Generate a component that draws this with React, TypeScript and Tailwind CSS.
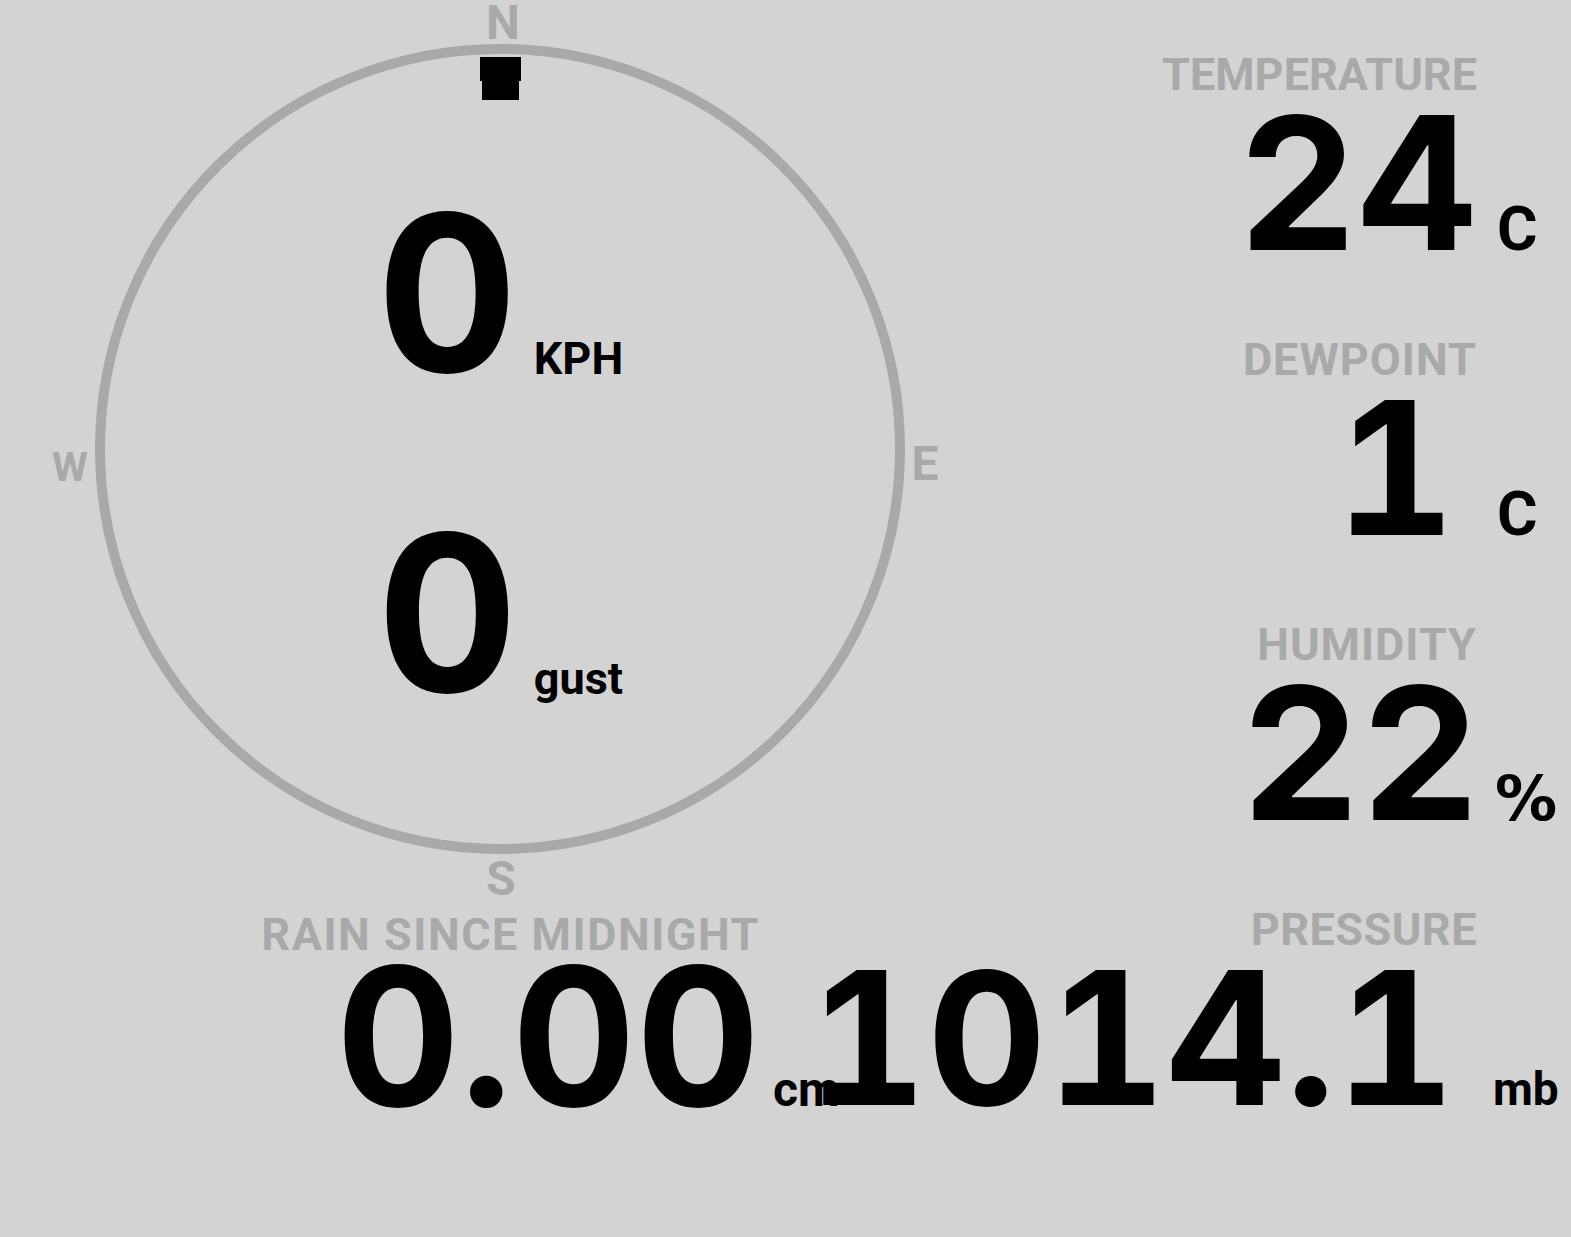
import React from "react";

type Stat = {
  label: string;
  value: string;
  unit: string;
  unitClass: string;
  numClass: string;
  labelClass: string;
};

const stats: Stat[] = [
  { label: "TEMPERATURE", value: "24", unit: "C", unitClass: "pl-[24px] text-[62px]", numClass: "mr-[-4px]", labelClass: "tracking-[0px]" },
  { label: "DEWPOINT", value: "1", unit: "C", unitClass: "pl-[24px] text-[62px]", numClass: "mr-[18px]", labelClass: "tracking-[1px]" },
  { label: "HUMIDITY", value: "22", unit: "%", unitClass: "pl-[22px] text-[62px] font-['DejaVu_Sans',sans-serif]", numClass: "mr-[-7px]", labelClass: "tracking-[1px]" },
  { label: "PRESSURE", value: "1014.1", unit: "mb", unitClass: "pl-[20px] text-[46px]", numClass: "mr-[18px]", labelClass: "tracking-[0.5px]" },
];

function Compass() {
  return (
    <svg width="1000" height="912" viewBox="0 0 1000 912" className="absolute left-0 top-0">
      <circle cx="500" cy="449" r="400" fill="none" stroke="#a9a9a9" strokeWidth="10" />
      <polygon points="480,57 521,57 521,81 519,81 519,100 482,100 482,81 480,81" fill="#000" />
      <g fill="#a9a9a9" fontFamily="Roboto, sans-serif" fontWeight="700">
        <text x="503" y="39" fontSize="48" textAnchor="middle">N</text>
        <text x="925" y="480" fontSize="48" textAnchor="middle">E</text>
        <text x="501" y="895" fontSize="48" textAnchor="middle">S</text>
        <text x="70" y="481" fontSize="41" textAnchor="middle">W</text>
      </g>
    </svg>
  );
}

function Speed({ value, unit }: { value: string; unit: string }) {
  return (
    <div className="flex items-baseline">
      <span className="font-['Inter',sans-serif] font-bold text-[218px] leading-[180px] tabular-nums">{value}</span>
      <span className="ml-[16px] text-[45px] leading-none font-bold translate-y-[2px]">{unit}</span>
    </div>
  );
}

export default function App() {
  return (
    <div className="w-[1571px] h-[1237px] bg-[#d3d3d3] overflow-hidden flex font-['Roboto',sans-serif] text-black select-none">
      {/* left: compass + rain */}
      <div className="w-[1000px] flex flex-col shrink-0">
        <div className="relative h-[912px]">
          <Compass />
          <div className="absolute left-0 top-0 w-[1000px] pt-[203px] flex flex-col items-center gap-[140px]">
            <Speed value="0" unit="KPH" />
            <Speed value="0" unit="gust" />
          </div>
        </div>

        <div className="w-[840px] flex flex-col items-end">
          <div className="mr-[80px] text-[45px] leading-none font-bold tracking-[1.5px] text-[#a9a9a9]">RAIN SINCE MIDNIGHT</div>
          <div className="flex items-baseline mt-[4px]">
            <span className="font-['Inter',sans-serif] font-bold text-[192px] leading-[150px] tabular-nums">0.00</span>
            <span className="w-[80px] pl-[13px] text-[48px] leading-none font-bold">cm</span>
          </div>
        </div>
      </div>

      {/* right: stats */}
      <div className="w-[571px] flex flex-col items-end pt-[52px]">
        {stats.map((s) => (
          <div key={s.label} className="h-[285px] flex flex-col items-end">
            <div className={`mr-[94px] text-[45px] leading-none font-bold text-[#a9a9a9] ${s.labelClass}`}>{s.label}</div>
            <div className="flex items-baseline mt-[11px]">
              <span className={`font-['Inter',sans-serif] font-bold text-[185px] leading-[150px] tabular-nums ${s.numClass}`}>{s.value}</span>
              <span className={`w-[98px] leading-none font-bold ${s.unitClass}`}>{s.unit}</span>
            </div>
          </div>
        ))}
      </div>
    </div>
  );
}
